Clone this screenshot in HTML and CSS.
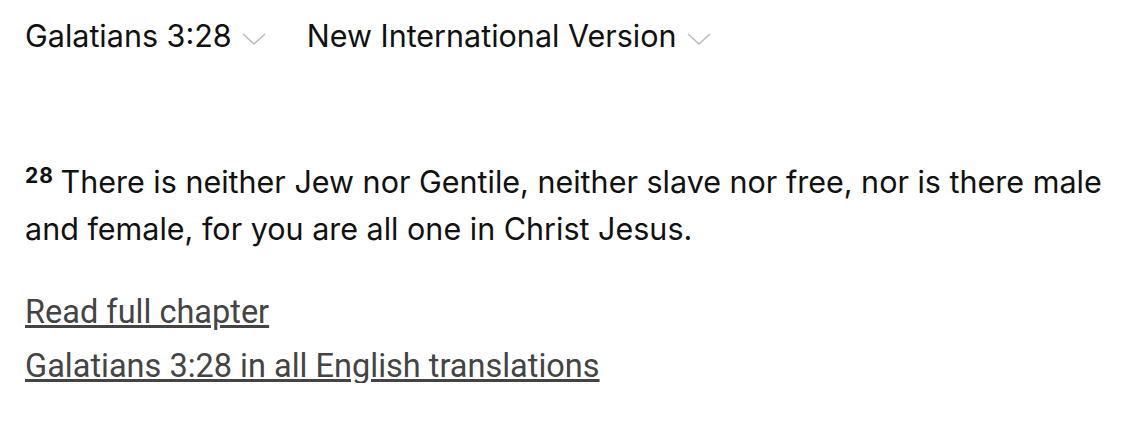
FILE: index.html
```html
<!DOCTYPE html>
<html lang="en">
<head>
  <meta charset="UTF-8">
  <title>Galatians 3:28</title>
  <link rel="stylesheet" href="styles.css">
</head>
<body>
  <div class="selectors">
    <div class="select">
      <span>Galatians 3:28</span>
      <svg class="chevron" width="24" height="14" viewBox="0 0 24 14"><polyline points="1,2 12,12 23,2" fill="none" stroke="#bbb" stroke-width="1.6"/></svg>
    </div>
    <div class="select">
      <span>New International Version</span>
      <svg class="chevron" width="24" height="14" viewBox="0 0 24 14"><polyline points="1,2 12,12 23,2" fill="none" stroke="#bbb" stroke-width="1.6"/></svg>
    </div>
  </div>

  <p class="verse"><sup class="num">28</sup> There is neither Jew nor Gentile, neither slave nor free, nor is there male and female, for you are all one in Christ Jesus.</p>

  <div class="links">
    <a href="#">Read full chapter</a>
    <a href="#">Galatians 3:28 in all English translations</a>
  </div>
</body>
</html>
```

FILE: styles.css
```css
body {
  margin: 0;
  padding: 0 12px 0 25px;
  background: #fff;
  color: #111;
  font-family: Inter, 'Liberation Sans', sans-serif;
}

.selectors {
  display: flex;
  gap: 41px;
  padding-top: 18px;
  font-size: 30.5px;
  line-height: 36px;
}

.select {
  display: flex;
  align-items: center;
  gap: 10px;
}

.chevron {
  margin-top: 6px;
}

.verse {
  margin: 104px 0 0;
  font-size: 30.5px;
  line-height: 47px;
}

.num {
  font-size: 21px;
  font-weight: 700;
  letter-spacing: 1px;
  margin-right: -2px;
  vertical-align: 10px;
  line-height: 0;
}

.links {
  display: flex;
  flex-direction: column;
  gap: 20px;
  margin-top: 43px;
  font-family: Roboto, 'Liberation Sans', sans-serif;
  font-size: 32.5px;
  line-height: 34px;
}

.links a {
  color: #444;
  align-self: flex-start;
}
```
